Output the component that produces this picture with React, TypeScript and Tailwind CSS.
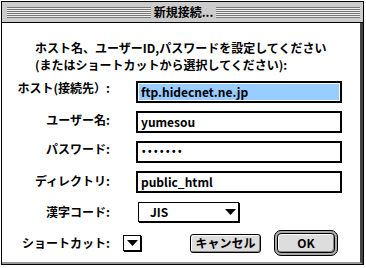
function Stripes() {
  return (
    <div className="flex-1 h-[11px] bg-[repeating-linear-gradient(to_bottom,#777777_0px,#777777_1px,#eeeeee_1px,#eeeeee_2px)]" />
  );
}

function Arrow({ className = "" }: { className?: string }) {
  return (
    <svg width="11" height="6" viewBox="0 0 11 6" className={className}>
      <polygon points="0,0 11,0 5.5,6" fill="#000" />
    </svg>
  );
}

function Field({
  label,
  labelTop,
  mt,
  children,
}: {
  label: string;
  labelTop: string;
  mt: string;
  children: React.ReactNode;
}) {
  return (
    <div className={`flex items-start ${mt}`}>
      <div className={`w-[108px] text-right leading-[16px] ${labelTop}`}>{label}</div>
      <div className="ml-[26px] w-[206px] h-[22px] border-2 border-black bg-white flex items-center">
        {children}
      </div>
    </div>
  );
}

export default function App() {
  return (
    <div className="w-[366px] h-[268px] bg-white pl-[1px] pt-[1px] font-['Noto_Sans_CJK_JP',sans-serif] font-bold text-[12px] text-black">
      <div className="w-[363px] h-[264px] border border-black flex flex-col">
        {/* title bar */}
        <div className="h-[21px] bg-[#cccccc] border-b border-black flex items-center pl-[5px] pr-[3px]">
          <Stripes />
          <div className="px-[3px] leading-[16px]">新規接続...</div>
          <Stripes />
        </div>

        {/* body */}
        <div className="flex-1 bg-white border-r-[3px] border-b-[2px] border-r-[#444444] border-b-[#999999]">
          <div className="pt-[16px] pl-[33px] leading-[17px]">
            <p>ホスト名、ユーザーID,パスワードを設定してください</p>
            <p>(またはショートカットから選択してください):</p>
          </div>

          <Field label="ホスト(接続先）:" labelTop="-mt-[1px]" mt="mt-[8px]">
            <div className="mx-[1px] flex-1 h-[16px] bg-[#99ccff] pl-[2px] leading-[16px]">
              ftp.hidecnet.ne.jp
            </div>
          </Field>
          <Field label="ユーザー名:" labelTop="mt-[1px]" mt="mt-[8px]">
            <span className="pl-[3px] leading-[16px]">yumesou</span>
          </Field>
          <Field label="パスワード:" labelTop="mt-0" mt="mt-[8px]">
            <span className="pl-[4px] font-['Liberation_Sans',sans-serif] text-[10px] tracking-[2.5px] leading-[16px]">
              •••••••
            </span>
          </Field>
          <Field label="ディレクトリ:" labelTop="mt-[2px]" mt="mt-[8px]">
            <span className="pl-[3px] leading-[16px]">public_html</span>
          </Field>

          {/* kanji code */}
          <div className="flex items-center mt-[9px]">
            <div className="w-[108px] text-right leading-[16px]">漢字コード:</div>
            <div className="ml-[28px] w-[101px] h-[20px] border border-black bg-white shadow-[1px_1px_0_#000] flex items-center pl-[11px] pr-[2px]">
              <span className="flex-1 leading-[16px]">JIS</span>
              <Arrow />
            </div>
          </div>

          {/* shortcut + buttons */}
          <div className="flex items-center mt-[8px] h-[26px]">
            <div className="w-[108px] text-right leading-[16px]">ショートカット:</div>
            <div className="ml-[13px] w-[18px] h-[16px] border border-black bg-white shadow-[1px_1px_0_#000] flex items-center justify-center">
              <Arrow />
            </div>
            <button className="ml-[49px] w-[71px] h-[19px] rounded-[3px] border border-black bg-[#dddddd] shadow-[inset_1px_1px_0_#ffffff,inset_-1px_-1px_0_#888888] leading-[16px] flex items-center justify-center">
              キャンセル
            </button>
            <div className="ml-[13px] w-[64px] h-[26px] rounded-[7px] border border-black bg-[#aaaaaa] p-[2px]">
              <button className="w-full h-full rounded-[4px] border border-black bg-[#dddddd] shadow-[inset_1px_1px_0_#ffffff,inset_-1px_-1px_0_#888888] leading-[16px] flex items-center justify-center">
                OK
              </button>
            </div>
          </div>
        </div>
      </div>
    </div>
  );
}
